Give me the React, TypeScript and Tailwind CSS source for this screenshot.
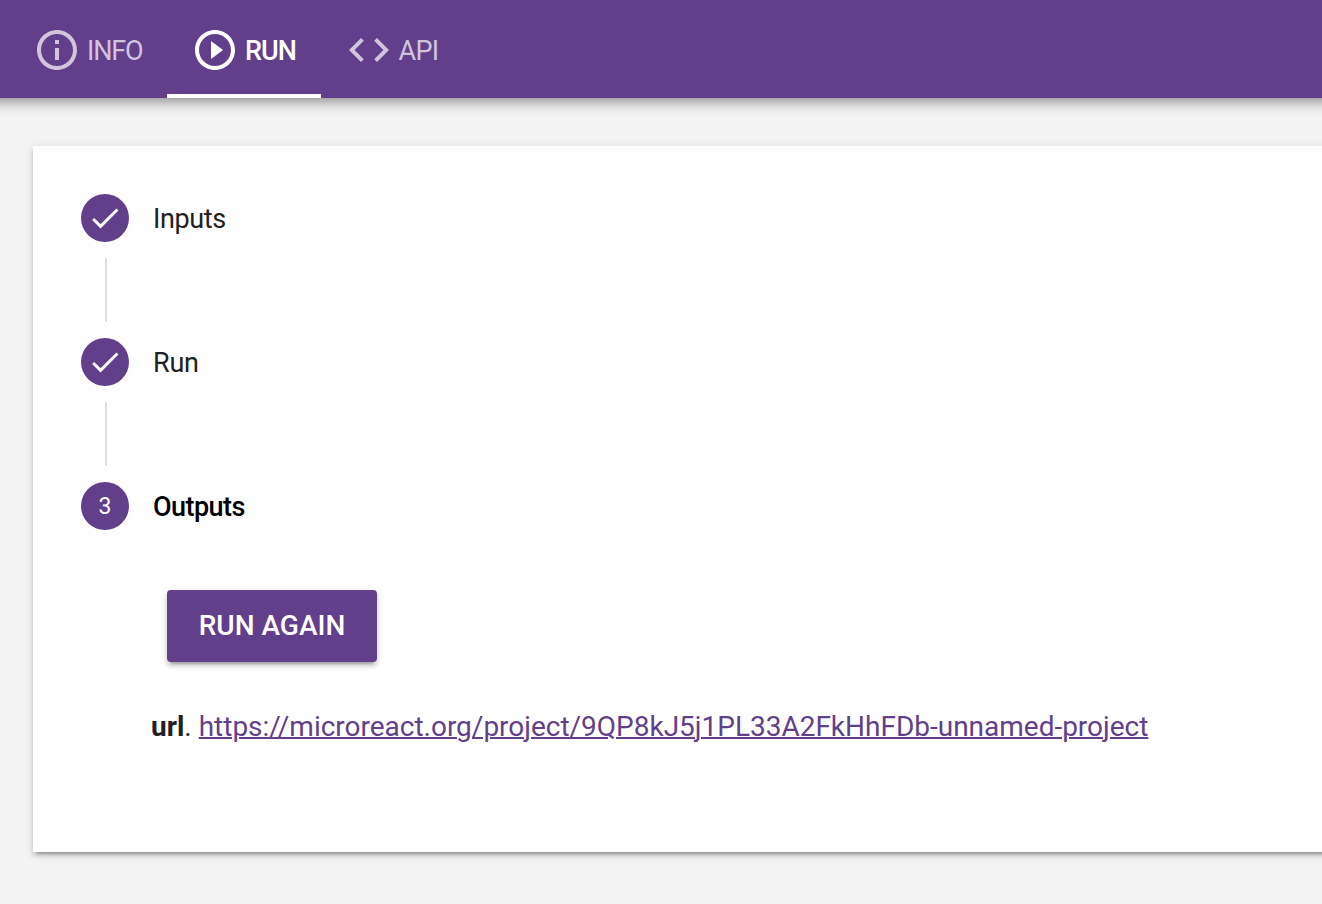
import type { ReactNode } from "react";

const tabs = [
  {
    label: "INFO",
    active: false,
    tab: "ml-[9px] w-[158px] pl-6",
    text: "tracking-[-1.2px]",
    d: "M11 7h2v2h-2zm0 4h2v6h-2zm1-9C6.48 2 2 6.48 2 12s4.480 10 10 10 10-4.480 10-10S17.520 2 12 2zm0 18c-4.410 0-8-3.590-8-8s3.590-8 8-8 8 3.590 8 8-3.590 8-8 8z",
  },
  {
    label: "RUN",
    active: true,
    tab: "w-[154px] pl-6",
    text: "font-medium tracking-[-1px]",
    d: "m10 16.500 6-4.500-6-4.500v9zM12 2C6.480 2 2 6.480 2 12s4.480 10 10 10 10-4.480 10-10S17.520 2 12 2zm0 18c-4.410 0-8-3.590-8-8s3.590-8 8-8 8 3.590 8 8-3.590 8-8 8z",
  },
  {
    label: "API",
    active: false,
    tab: "w-[142px] pl-[23.5px]",
    text: "tracking-[-0.7px]",
    d: "M9.400 16.600 4.800 12l4.600-4.600L8 6l-6 6 6 6 1.400-1.400zm5.200 0 4.600-4.600-4.600-4.600L16 6l6 6-6 6-1.400-1.400z",
  },
];

function Step({ badge, children }: { badge: ReactNode; children: ReactNode }) {
  return (
    <div className="flex h-12 items-center gap-6">
      <span className="flex size-12 items-center justify-center rounded-full bg-[#623f8b] text-white">{badge}</span>
      {children}
    </div>
  );
}

function Check() {
  return (
    <svg viewBox="0 0 24 24" className="size-9 fill-current">
      <path d="M9 16.170 4.830 12l-1.420 1.410L9 19 21 7l-1.410-1.410z" />
    </svg>
  );
}

function Connector() {
  return <div className="my-4 ml-6 h-16 w-0.5 bg-[#dedede]" />;
}

export default function App() {
  return (
    <div className="h-[904px] w-[1322px] overflow-hidden bg-[#f4f4f4] font-['Roboto',sans-serif] text-[28px] text-[#212121]">
      <header className="relative -ml-5 flex h-[98px] w-[1400px] bg-[#623f8b] pl-5 shadow-[0_4px_8px_-2px_rgba(0,0,0,.2),0_8px_10px_rgba(0,0,0,.14),0_2px_20px_rgba(0,0,0,.12)]">
        {tabs.map((t) => (
          <button
            key={t.label}
            className={`flex items-center gap-1.5 border-b-4 pt-1.5 ${t.tab} ${t.active ? "border-white text-white" : "border-transparent text-[#d0c5dc]"}`}
          >
            <svg viewBox="0 0 24 24" className="size-12 shrink-0 fill-current">
              <path d={t.d} />
            </svg>
            <span className={`pt-0.5 text-[27px] leading-10 ${t.text}`}>{t.label}</span>
          </button>
        ))}
      </header>
      <main className="mt-12 ml-[33px] h-[706px] w-[1400px] bg-white px-12 pt-12 shadow-[0_6px_2px_-4px_rgba(0,0,0,.2),0_4px_4px_rgba(0,0,0,.14),0_2px_10px_rgba(0,0,0,.12)]">
        <Step badge={<Check />}>
          <span className="pt-0.5 text-[27px] leading-10 tracking-[-0.4px]">Inputs</span>
        </Step>
        <Connector />
        <Step badge={<Check />}>
          <span className="pt-0.5 text-[27px] leading-10 tracking-[-0.2px]">Run</span>
        </Step>
        <Connector />
        <Step badge={<span className="pt-0.5 text-[23px] leading-8">3</span>}>
          <span className="pt-0.5 text-[27px] leading-10 font-medium tracking-[-0.55px] text-black">Outputs</span>
        </Step>
        <button className="mt-[60px] ml-[86px] flex h-[72px] w-[210px] items-center justify-center rounded bg-[#623f8b] font-medium text-white shadow-[0_6px_2px_-4px_rgba(0,0,0,.2),0_4px_4px_rgba(0,0,0,.14),0_2px_10px_rgba(0,0,0,.12)]">
          RUN AGAIN
        </button>
        <p className="mt-[45px] ml-[70px] flex h-10 items-center whitespace-pre">
          <b>url</b>. <a href="#" className="tracking-[-0.01px] text-[#623f8b] underline decoration-2">https://microreact.org/project/9QP8kJ5j1PL33A2FkHhFDb-unnamed-project</a>
        </p>
      </main>
    </div>
  );
}
